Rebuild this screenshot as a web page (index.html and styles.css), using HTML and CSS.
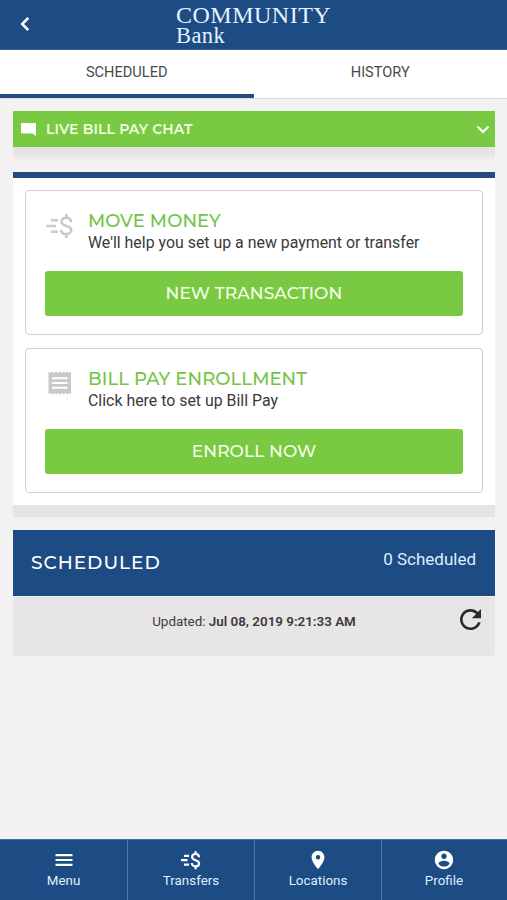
FILE: index.html
```
<!DOCTYPE html>
<html lang="en">
<head>
    <meta charset="utf-8">
    <title>Bill Pay</title>
    <link rel="stylesheet" href="styles.css">
</head>

<body>

    <header class="top-bar">
        <a href="#" class="back-button" aria-label="Back">
            <svg width="10" height="16" viewBox="0 0 10 16"><path d="M8.300 1.800 2.200 8l6.100 6.200"/></svg>
        </a>
        <div class="logo">
            <span class="logo-top">COMMUNITY</span>
            <span class="logo-bottom">Bank</span>
        </div>
    </header>

    <nav class="tabs">
        <a href="#" class="tab active">SCHEDULED</a>
        <a href="#" class="tab">HISTORY</a>
    </nav>

    <main class="content">
        <div class="chat-bar">
            <svg class="chat-icon" width="15" height="13" viewBox="0 0 15 13"><path d="M1 0h13a1 1 0 0 1 1 1v12l-3.500-2.600H1a1 1 0 0 1-1-1V1a1 1 0 0 1 1-1z"/></svg>
            <span class="chat-title">LIVE BILL PAY CHAT</span>
            <svg class="chat-arrow" width="14" height="9" viewBox="0 0 14 9"><path d="M1.500 1.500 7 7l5.500-5.500"/></svg>
        </div>
        <div class="chat-shadow"></div>

        <section class="panel">
            <div class="card">
                <div class="card-head">
                    <svg class="card-icon" width="28" height="26" viewBox="0 0 28 26">
                        <path class="line" d="M5 7.200h7M.5 13H10M5 18.800h7"/>
                        <path class="line" d="M25 9c0-3-2-4.300-4.700-4.300s-4.800 1.600-4.800 4c0 5.600 9.700 2.800 9.700 8.200 0 2.700-2.200 4.200-4.900 4.200-3 0-5.200-1.500-5.200-4.400M20.300 1v3.700M20.300 21v4"/>
                    </svg>
                    <div>
                        <h2 class="card-title">MOVE MONEY</h2>
                        <p class="card-text">We'll help you set up a new payment or transfer</p>
                    </div>
                </div>
                <button class="green-button">NEW TRANSACTION</button>
            </div>

            <div class="card">
                <div class="card-head">
                    <svg class="card-icon receipt" width="28" height="26" viewBox="0 0 28 26">
                        <path fill-rule="evenodd" d="M2.500 1.500 4.400 3l1.900-1.500L8.200 3l1.900-1.500L12 3l1.900-1.500L15.800 3l1.900-1.500L19.600 3l1.900-1.500L23.400 3 25 1.500v23L23.400 23l-1.900 1.500-1.900-1.500-1.900 1.500-1.900-1.500-1.900 1.500L12 23l-1.900 1.500L8.200 23l-1.900 1.500L4.400 23l-1.900 1.500zM6 7.200v2h15.500v-2zM6 12v2h15.500v-2zM6 16.800v2h15.500v-2z"/>
                    </svg>
                    <div>
                        <h2 class="card-title">BILL PAY ENROLLMENT</h2>
                        <p class="card-text">Click here to set up Bill Pay</p>
                    </div>
                </div>
                <button class="green-button">ENROLL NOW</button>
            </div>
        </section>

        <section class="scheduled">
            <div class="scheduled-head">
                <h2 class="scheduled-title">SCHEDULED</h2>
                <span class="scheduled-count">0 Scheduled</span>
            </div>
            <div class="updated">
                <p class="updated-text">Updated: <b>Jul 08, 2019 9:21:33 AM</b></p>
                <a href="#" class="refresh" aria-label="Refresh">
                    <svg width="21" height="21" viewBox="4 4 16 16"><path d="M17.650 6.350C16.200 4.900 14.210 4 12 4c-4.420 0-7.990 3.580-7.990 8s3.570 8 7.990 8c3.730 0 6.840-2.550 7.730-6h-2.080c-.82 2.330-3.040 4-5.650 4-3.310 0-6-2.690-6-6s2.690-6 6-6c1.660 0 3.140.69 4.220 1.780L13 11h7V4l-2.350 2.350z"/></svg>
                </a>
            </div>
        </section>
    </main>

    <footer class="bottom-nav">
        <a href="#" class="nav-item">
            <svg width="24" height="24" viewBox="0 0 24 24"><path d="M3.500 18h17v-2.200h-17V18zm0-4.900h17v-2.200h-17v2.200zM3.500 6v2.200h17V6h-17z"/></svg>
            <span>Menu</span>
        </a>
        <a href="#" class="nav-item">
            <svg width="24" height="24" viewBox="0 0 24 24">
                <path class="line" d="M5 7.800h5M2 12.200h6.500M5 16.600h5"/>
                <path class="line" d="M20 9.200c0-2.200-1.400-3.200-3.400-3.200s-3.500 1.200-3.500 3c0 4.200 7 2.200 7 6.200 0 2-1.600 3.100-3.500 3.100-2.200 0-3.800-1.100-3.800-3.200M16.600 3.200V6M16.600 18.300v2.900"/>
            </svg>
            <span>Transfers</span>
        </a>
        <a href="#" class="nav-item">
            <svg width="22" height="22" viewBox="0 0 24 24"><path d="M12 2C8.130 2 5 5.130 5 9c0 5.250 7 13 7 13s7-7.750 7-13c0-3.870-3.130-7-7-7zm0 9.500a2.500 2.500 0 0 1 0-5 2.500 2.500 0 0 1 0 5z"/></svg>
            <span>Locations</span>
        </a>
        <a href="#" class="nav-item">
            <svg width="22" height="22" viewBox="0 0 24 24"><path d="M12 2C6.480 2 2 6.480 2 12s4.480 10 10 10 10-4.480 10-10S17.520 2 12 2zm0 3c1.660 0 3 1.340 3 3s-1.340 3-3 3-3-1.340-3-3 1.340-3 3-3zm0 14.200c-2.500 0-4.710-1.280-6-3.220.03-1.990 4-3.080 6-3.080 1.990 0 5.970 1.090 6 3.080-1.290 1.940-3.500 3.220-6 3.220z"/></svg>
            <span>Profile</span>
        </a>
    </footer>

</body>
</html>
```

FILE: styles.css
```
* {
    box-sizing: border-box;
}

body {
    margin: 0;
    height: 900px;
    display: flex;
    flex-direction: column;
    background-color: #f2f2f2;
    color: #3a3a3a;
    font-family: Roboto, Arial, sans-serif;
}

a {
    color: inherit;
    text-decoration: none;
}

h2, p {
    margin: 0;
}

svg {
    display: block;
    fill: currentColor;
}

.line {
    fill: none;
    stroke: currentColor;
    stroke-width: 2.2;
}

/* header */
.top-bar {
    height: 50px;
    display: grid;
    grid-template-columns: 176px 1fr;
    background-color: #1d4b83;
    border-bottom: 1px solid #3d5f92;
    color: #fff;
}

.back-button {
    padding: 16px 0 0 20px;
}

.back-button path {
    fill: none;
    stroke: currentColor;
    stroke-width: 2.6;
}

.logo {
    display: flex;
    flex-direction: column;
    padding-top: 5px;
    font-family: "Liberation Serif", "Times New Roman", serif;
    color: #e4f3ff;
}

.logo-top {
    font-size: 24px;
    line-height: 21px;
    letter-spacing: 0.5px;
}

.logo-bottom {
    font-size: 22.5px;
    line-height: 20px;
    letter-spacing: 0.4px;
}

/* tabs */
.tabs {
    height: 49px;
    display: grid;
    grid-template-columns: 1fr 1fr;
    background-color: #fff;
    border-bottom: 1px solid #dcdcdc;
}

.tab {
    height: 48px;
    padding-top: 13px;
    text-align: center;
    font-size: 14.6px;
    line-height: 18px;
    color: #4a4a4a;
}

.tab.active {
    border-bottom: 4px solid #234b80;
}

.content {
    flex: 1;
    padding: 12px 12px 0 13px;
}

/* live chat */
.chat-bar {
    height: 36px;
    display: flex;
    align-items: center;
    padding: 0 5px 0 8px;
    background-color: #7ac943;
    color: #fff;
}

.chat-title {
    flex: 1;
    margin-left: 10px;
    font-family: Montserrat, Inter, sans-serif;
    font-size: 14px;
    font-weight: 600;
    letter-spacing: 0.15px;
    color: #f0ffe0;
}

.chat-arrow path {
    fill: none;
    stroke: currentColor;
    stroke-width: 2.2;
}

.chat-shadow {
    height: 14px;
    background: linear-gradient(#e5e2e2 40%, #f2f2f2);
}

/* cards */
.panel {
    height: 345px;
    margin-top: 11px;
    padding: 12px;
    display: flex;
    flex-direction: column;
    gap: 13px;
    background-color: #fff;
    border-top: 6px solid #234b80;
    border-bottom: 12px solid #e5e4e4;
}

.card {
    height: 145px;
    padding: 20px 19px 0;
    border: 1.500px solid #cfcfcf;
    border-radius: 4px;
}

.card-head {
    display: flex;
    gap: 14px;
    height: 60px;
    padding-left: 1px;
}

.card-icon {
    margin-top: 2px;
    color: #c9c9c9;
}

.card-icon .line {
    stroke-width: 2.6;
}

.card-icon.receipt {
    margin-top: 1px;
}

.card-title {
    font-family: Montserrat, Inter, sans-serif;
    font-size: 18px;
    font-weight: 500;
    line-height: 20px;
    letter-spacing: 0.1px;
    color: #74c345;
}

.card-text {
    padding-top: 1px;
    font-size: 15.9px;
    line-height: 22px;
    white-space: nowrap;
}

.green-button {
    display: block;
    width: 100%;
    height: 45px;
    padding: 0 0 2px;
    border: none;
    border-radius: 3px;
    background-color: #7ac943;
    color: #f4ffe8;
    font-family: Montserrat, Inter, sans-serif;
    font-size: 17px;
    font-weight: 500;
    letter-spacing: 0.1px;
    cursor: pointer;
}

/* scheduled list */
.scheduled {
    margin-top: 13px;
}

.scheduled-head {
    height: 66px;
    display: flex;
    justify-content: space-between;
    align-items: center;
    padding: 0 19px 2px 18px;
    background-color: #1d4b83;
    color: #fff;
}

.scheduled-title {
    font-family: Montserrat, Inter, sans-serif;
    font-size: 18.5px;
    font-weight: 500;
    letter-spacing: 1px;
}

.scheduled-count {
    padding-bottom: 6px;
    font-size: 17px;
    color: #deefff;
}

.updated {
    height: 60px;
    display: grid;
    grid-template-columns: 1fr auto 1fr;
    background-color: #e7e5e6;
    border-top: 1px solid #f2f2f2;
    border-radius: 0 0 4px 4px;
}

.updated-text {
    grid-column: 2;
    padding-top: 17px;
    font-size: 13.4px;
    line-height: 16px;
    white-space: nowrap;
}

.updated-text b {
    font-weight: 600;
}

.refresh {
    justify-self: end;
    padding: 12px 14px 0 0;
    color: #2b2b2b;
}

/* bottom menu */
.bottom-nav {
    height: 61px;
    display: grid;
    grid-template-columns: 128px 127px 127px 1fr;
    background-color: #1d4b83;
    border-top: 1px solid #4a6e9f;
}

.nav-item {
    display: flex;
    flex-direction: column;
    align-items: center;
    padding-top: 8px;
    border-right: 1px solid #4a78ae;
    color: #fff;
}

.nav-item:last-child {
    padding-right: 1px;
    border-right: none;
}

.nav-item svg {
    height: 24px;
}

.nav-item span {
    margin-top: 1px;
    font-size: 13.4px;
    line-height: 16px;
    color: #deefff;
}
```
